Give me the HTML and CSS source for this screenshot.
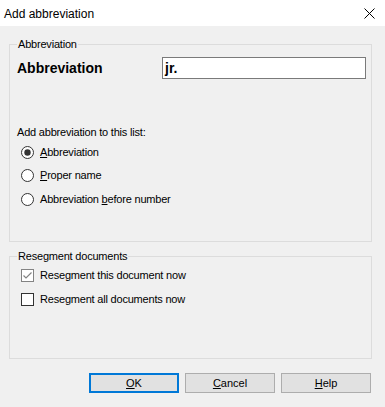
FILE: index.html
```html
<!DOCTYPE html>
<html>
<head>
<meta charset="utf-8">
<link rel="stylesheet" href="styles.css">
</head>
<body>
<div class="window">
  <div class="titlebar">
    <span class="title">Add abbreviation</span>
    <svg class="close" width="11" height="11" viewBox="0 0 11 11"><path d="M0.5 0.5 L10.5 10.5 M10.5 0.5 L0.5 10.5" stroke="#000" stroke-width="1" fill="none"/></svg>
  </div>
  <div class="content">
    <div class="group g1">
      <span class="legend">Abbreviation</span>
      <div class="abbr-row">
        <span class="big-label">Abbreviation</span>
        <div class="input">jr.</div>
      </div>
      <div class="list-label">Add abbreviation to this list:</div>
      <div class="option">
        <svg class="radio" width="13" height="13" viewBox="0 0 13 13"><circle cx="6.5" cy="6.5" r="6" fill="#fff" stroke="#333" stroke-width="1"/><circle cx="6.5" cy="6.5" r="3.2" fill="#333"/></svg>
        <span><u>A</u>bbreviation</span>
      </div>
      <div class="option">
        <svg class="radio" width="13" height="13" viewBox="0 0 13 13"><circle cx="6.5" cy="6.5" r="6" fill="#fff" stroke="#333" stroke-width="1"/></svg>
        <span><u>P</u>roper name</span>
      </div>
      <div class="option last">
        <svg class="radio" width="13" height="13" viewBox="0 0 13 13"><circle cx="6.5" cy="6.5" r="6" fill="#fff" stroke="#333" stroke-width="1"/></svg>
        <span>Abbreviation <u>b</u>efore number</span>
      </div>
    </div>
    <div class="group g2">
      <span class="legend">Resegment documents</span>
      <div class="check-row first">
        <svg class="check disabled" width="13" height="13" viewBox="0 0 13 13"><rect x="0.5" y="0.5" width="12" height="12" fill="#fff" stroke="#838383"/><path d="M2.5 6.5 L5 9 L10.5 3.5" stroke="#838383" stroke-width="1.2" fill="none"/></svg>
        <span>Resegment this document now</span>
      </div>
      <div class="check-row">
        <svg class="check" width="13" height="13" viewBox="0 0 13 13"><rect x="0.5" y="0.5" width="12" height="12" fill="#fff" stroke="#333"/></svg>
        <span>Resegment all documents now</span>
      </div>
    </div>
    <div class="buttons">
      <div class="btn default"><u>O</u>K</div>
      <div class="btn"><u>C</u>ancel</div>
      <div class="btn"><u>H</u>elp</div>
    </div>
  </div>
</div>
</body>
</html>
```

FILE: styles.css
```css
html, body {
  margin: 0;
  padding: 0;
}
body {
  font-family: "Liberation Sans", Arial, sans-serif;
  font-size: 11px;
  color: #000;
  background: #f0f0f0;
}
.window {
  width: 385px;
  height: 407px;
  background: #f0f0f0;
  box-sizing: border-box;
  overflow: hidden;
}
.titlebar {
  height: 26px;
  background: #fff;
  display: flex;
  align-items: center;
  justify-content: space-between;
}
.title {
  font-size: 12px;
  margin-left: 4px;
  margin-top: 1px;
}
.close {
  margin-right: 10px;
  display: block;
}
.content {
  padding-left: 9px;
  padding-top: 18px;
}
.group {
  width: 363px;
  box-sizing: border-box;
  border: 1px solid #dcdcdc;
  padding-left: 7px;
}
.g1 {
  height: 198px;
}
.g2 {
  height: 103px;
  margin-top: 14px;
}
.legend {
  display: block;
  width: fit-content;
  line-height: 13px;
  height: 13px;
  margin-top: -7px;
  padding: 0 1px;
  background: #f0f0f0;
  letter-spacing: -0.2px;
}
.abbr-row {
  display: flex;
  align-items: center;
  height: 22px;
  margin-top: 6px;
}
.big-label {
  width: 145px;
  font-weight: bold;
  font-size: 14px;
}
.input {
  width: 204px;
  height: 22px;
  box-sizing: border-box;
  border: 1px solid #7a7a7a;
  background: #fff;
  font-weight: bold;
  font-size: 14px;
  line-height: 20px;
  padding-left: 2px;
}
.list-label {
  margin-top: 47px;
  line-height: 13px;
  letter-spacing: -0.2px;
}
.option, .check-row {
  display: flex;
  align-items: center;
  height: 16px;
  margin-top: 7px;
  letter-spacing: -0.2px;
}
.list-label + .option {
  margin-top: 5px;
}
.option.last {
  margin-top: 8px;
}
.radio, .check {
  display: block;
  margin-left: 4px;
  margin-right: 6px;
  flex: none;
}
.check-row {
  margin-top: 8px;
}
.check-row.first {
  margin-top: 4px;
}
.buttons {
  display: flex;
  justify-content: flex-end;
  gap: 6px;
  width: 362px;
  margin-top: 14px;
}
.btn {
  width: 90px;
  height: 20px;
  box-sizing: border-box;
  background: #e1e1e1;
  border: 1px solid #adadad;
  display: flex;
  align-items: center;
  justify-content: center;
  font-size: 11px;
}
.btn.default {
  border: 2px solid #0078d7;
}
```
